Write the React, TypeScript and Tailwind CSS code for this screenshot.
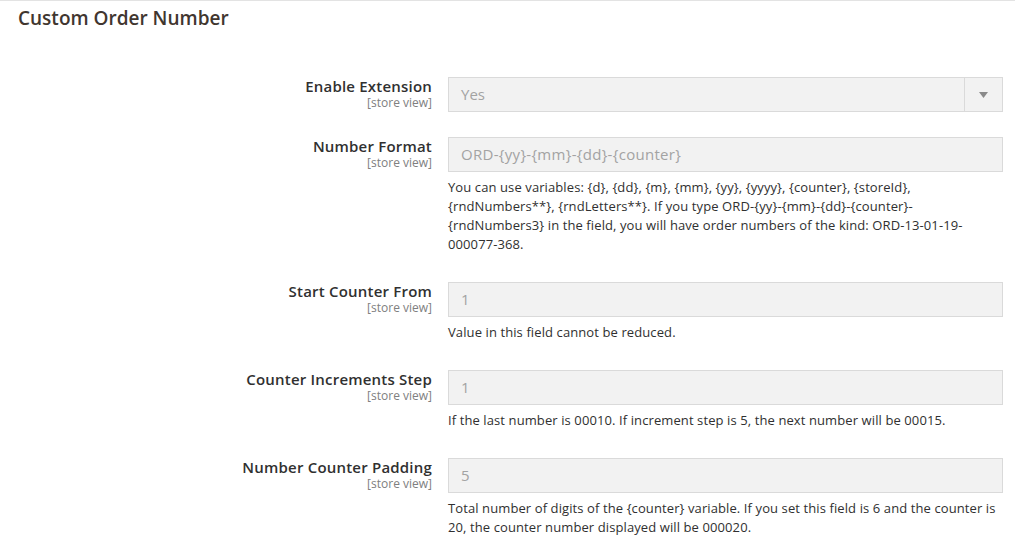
import React from 'react';

type Field = {
  label: string;
  value: string;
  select?: boolean;
  note?: string;
};

const fields: Field[] = [
  { label: 'Enable Extension', value: 'Yes', select: true },
  {
    label: 'Number Format',
    value: 'ORD-{yy}-{mm}-{dd}-{counter}',
    note: 'You can use variables: {d}, {dd}, {m}, {mm}, {yy}, {yyyy}, {counter}, {storeId}, {rndNumbers**}, {rndLetters**}. If you type ORD-{yy}-{mm}-{dd}-{counter}-{rndNumbers3} in the field, you will have order numbers of the kind: ORD-13-01-19-000077-368.',
  },
  { label: 'Start Counter From', value: '1', note: 'Value in this field cannot be reduced.' },
  {
    label: 'Counter Increments Step',
    value: '1',
    note: 'If the last number is 00010. If increment step is 5, the next number will be 00015.',
  },
  {
    label: 'Number Counter Padding',
    value: '5',
    note: 'Total number of digits of the {counter} variable. If you set this field is 6 and the counter is 20, the counter number displayed will be 000020.',
  },
];

const FieldRow: React.FC<{ field: Field }> = ({ field }) => (
  <div className={`flex ${field.note ? 'mb-[28px]' : 'mb-[25px]'}`}>
    <div className="w-[432px] shrink-0 text-right">
      <div className="text-[15px] leading-[19px] font-semibold tracking-[0.2px] text-[#303030]">{field.label}</div>
      <div className="text-[12px] leading-[14px] text-[#808080]">[store view]</div>
    </div>
    <div className="ml-[16px] w-[555px]">
      {field.select ? (
        <div className="flex h-[35px] border border-[#dadada] bg-[#f2f2f2]">
          <div className="flex flex-1 items-center pl-[12px] text-[15px] text-[#a3a3a3]">{field.value}</div>
          <div className="flex w-[38px] items-center justify-center border-l border-[#dadada]">
            <svg width="9" height="6" viewBox="0 0 9 6">
              <path d="M0 0h9L4.5 6z" fill="#8a8a8a" />
            </svg>
          </div>
        </div>
      ) : (
        <div className="flex h-[35px] items-center border border-[#dadada] bg-[#f2f2f2] pl-[12px] text-[15px] tracking-[0.3px] text-[#a3a3a3]">
          {field.value}
        </div>
      )}
      {field.note && (
        <p className="mt-[6px] pr-[6px] text-[13px] leading-[19px] tracking-[0.1px] text-[#303030]">{field.note}</p>
      )}
    </div>
  </div>
);

export default function App() {
  return (
    <div className="h-[552px] w-[1015px] overflow-hidden bg-white font-['Open_Sans',sans-serif]">
      <div className="border-t border-[#e3e3e3] px-[18px] pt-[5px]">
        <h2 className="text-[19px] leading-[25px] font-semibold text-[#41362f]">Custom Order Number</h2>
      </div>
      <div className="pt-[46px]">
        {fields.map((f) => (
          <FieldRow key={f.label} field={f} />
        ))}
      </div>
    </div>
  );
}
